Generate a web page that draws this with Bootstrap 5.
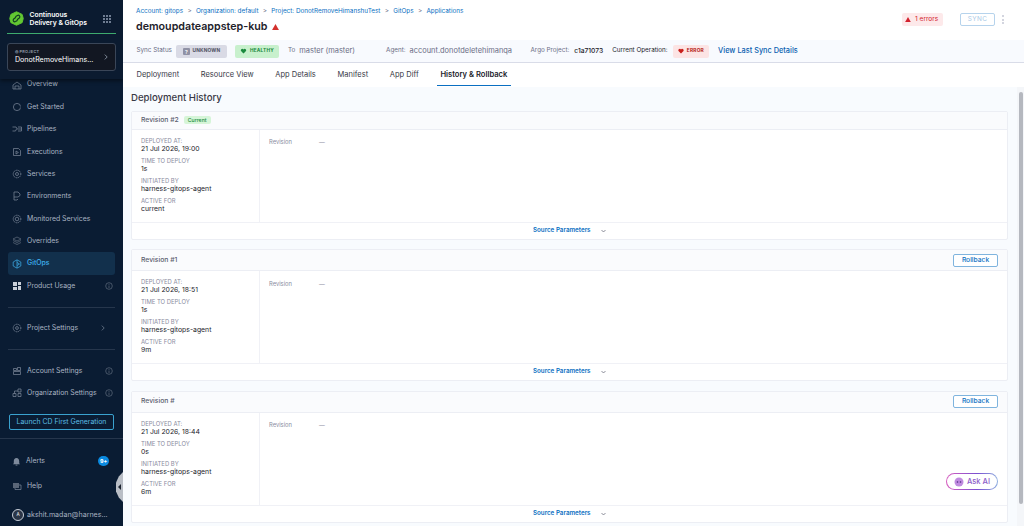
<!DOCTYPE html>
<html lang="en">
<head>
<meta charset="UTF-8">
<meta name="viewport" content="width=device-width, initial-scale=1.0">
<title>History &amp; Rollback</title>
<link href="https://cdn.jsdelivr.net/npm/bootstrap@5.3.0/dist/css/bootstrap.min.css" rel="stylesheet">
<style>
html, body { height: 526px; overflow: hidden; }
body { font-family: Inter, "Liberation Sans", sans-serif; font-size: 7px; color: #22222a; background: #fafcff; }
.app-shell { width: 1024px; height: 526px; }
.side-rail { width: 123px; height: 526px; background: #0a1c33; color: #a9b3c2; flex: none; position: relative; overflow: hidden; }
.side-top { height: 79px; flex: none; padding: 11px 7px 0; background: #0b1b30; box-shadow: 0 2px 4px rgba(0,0,0,.45); position: relative; z-index: 1; }
.side-brand { height: 23px; border-bottom: 1px solid #3dab6e; padding: 0 1px 0 2px; color: #fff; font-size: 6.8px; font-weight: 600; line-height: 8.3px; gap: 5.5px; }
.brand-dots { display: grid; grid-template-columns: repeat(3, 2px); gap: 1.2px; }
.brand-dots i { width: 2px; height: 2px; background: #6f7d92; display: block; }
.project-pick { height: 28px; margin-top: 9px; border: 1px solid #3a4658; border-radius: 3px; background: #121722; padding: 5px 7px; color: #fff; font-size: 7.1px; }
.project-pick small { display: block; font-size: 3.8px; font-weight: 600; letter-spacing: .3px; color: #95a0b0; line-height: 7px; }
.side-list { padding: 0 8px; margin-top: -5.7px; }
.side-row { height: 22.4px; padding: 0 2px 0 4px; gap: 5px; font-size: 6.9px; }
.side-row svg { flex: none; }
.side-row.is-on { background: #12304c; border-radius: 3px; color: #3fb1ee; font-weight: 500; }
.side-rule { border-top: 1px solid #26364c; margin: 9.5px 0; }
.launch-btn { width: 105px; height: 16px; margin: 9.5px 0 0 1px; border: 1px solid #3aa2cf; border-radius: 2px; color: #5dbde4; font-size: 6.9px; }
.foot-rule { border-top: 1px solid #26364c; margin: 8px -8px 11px; }
.help-row { margin-top: 2.6px; }
.user-row { margin-top: 6.6px; gap: 3px; font-size: 7.1px; }
.nine-pill { background: #0a8ae0; color: #fff; font-size: 5.4px; font-weight: 700; border-radius: 6px; width: 11px; height: 10px; }
.avatar-dot { width: 12px; height: 12px; border: 1px solid #c7ced8; border-radius: 50%; font-size: 4.6px; color: #fff; background: #2a3547; flex: none; }
.rail-handle { position: absolute; right: 0; top: 472px; width: 7px; height: 30px; background: #b9bec6; clip-path: polygon(100% 0, 100% 100%, 40% 85%, 0 65%, 0 35%, 40% 15%); z-index: 2; }
.rail-handle::after { content: ""; position: absolute; left: 2px; top: 12px; border: 3px solid transparent; border-right-color: #1c2430; border-left: 0; }
.main-pane { min-width: 0; height: 526px; }
.top-head { height: 40px; flex: none; background: #fff; padding: 7px 20px 0 13px; }
.crumbs { font-size: 6.35px; color: #0a6fc2; gap: 4.3px; line-height: 8px; }
.crumbs b { font-weight: 400; color: #6b6d85; }
.app-title { font-size: 10.7px; font-weight: 600; color: #22222a; margin: 5px 0 0; line-height: 14px; }
.head-tools { margin-top: 6px; }
.err-chip { background: #fde9ea; color: #d3212d; border-radius: 2px; height: 13px; padding: 0 3px; font-size: 6.6px; gap: 4px; margin-right: 17px; width: 41px; white-space: nowrap; }
.sync-btn { width: 35px; height: 13px; border: 1px solid #b6d3ec; border-radius: 2px; color: #a9c9e6; font-size: 6.4px; letter-spacing: .4px; }
.kebab-dots { margin: 2px 0 0 7px; width: 2px; gap: 1.6px; }
.kebab-dots i { width: 2px; height: 2px; background: #c4c7d4; border-radius: 50%; display: block; }
.sync-bar { height: 23px; flex: none; background: #f8fafe; border-bottom: 1px solid #d9dce8; padding: 0 0 0 13.5px; font-size: 6.3px; color: #6b6d85; }
.sync-val { font-size: 7.45px; color: #6b6d85; margin-left: 4px; }
.sp-to { margin-left: 9px; }
.sp-agent { margin-left: 31px; }
.sp-argo { margin-left: 18.5px; }
.sp-cur { margin-left: 9px; color: #22222a; }
.argo-val { margin-left: 5px; color: #22222a; font-weight: 500; font-size: 6.7px; }
.last-sync { margin-left: 9px; color: #0a5fb0; font-size: 7.35px; font-weight: 500; }
.pill-gray, .pill-green, .pill-red { height: 13px; border-radius: 2px; font-size: 4.8px; font-weight: 700; letter-spacing: .2px; gap: 3px; flex: none; }
.pill-gray { background: #d9dae5; color: #4f5162; width: 51px; }
.pill-green { background: #c8f0cd; color: #1b8a3e; width: 44px; }
.pill-red { background: #fce4e4; color: #b41710; width: 36.5px; margin-left: 5px; }
.tab-strip { height: 24px; flex: none; background: #fff; padding-left: 13.5px; gap: 21.7px; font-size: 7.5px; color: #383946; }
.tab-strip span { height: 23px; line-height: 23.5px; }
.tab-strip .tab-on { font-weight: 600; font-size: 7.6px; color: #22222a; box-shadow: 0 -1px 0 #0a6fc2 inset; padding: 0 3.5px; margin: 0 -3.5px; }
.hist-pane { background: #f8fbfe; padding: 0 9.5px 0 8px; position: relative; min-width: 0; }
.hist-title { font-size: 9.6px; font-weight: 500; color: #383946; line-height: 12px; padding: 4.5px 0 7px; margin: 0; }
.rev-card { background: #fff; border: 1px solid #eceef4; border-radius: 2px; margin-bottom: 9.5px; }
.rev-top { background: #fafbfd; border-bottom: 1px solid #eceef4; padding: 0 8.5px 0 9px; font-size: 6.8px; font-weight: 500; color: #5c5e70; gap: 5px; }
.rev-top.first { height: 18px; }
.rev-top.other { height: 21px; }
.cur-tag { background: #d6f5d8; color: #1b8a3e; font-size: 5.2px; font-weight: 500; border-radius: 2px; padding: 1.5px 4px; line-height: 5px; }
.roll-btn { width: 45px; height: 13px; border: 1px solid #7fb4de; border-radius: 2px; background: #fff; color: #0a6fc2; font-size: 6.7px; font-weight: 500; padding: 0; }
.rev-body { height: 92px; }
.rev-meta { width: 128px; height: 92px; border-right: 1px solid #f0f1f6; padding: 7px 9px 0; flex: none; }
.meta-k { font-size: 5.9px; color: #8a8ca0; line-height: 7px; text-transform: uppercase; }
.meta-v { font-size: 6.85px; color: #22222a; line-height: 9.4px; margin-bottom: 3.6px; }
.rev-info { padding: 8.5px 9px 0; gap: 27px; font-size: 5.8px; color: #8a8ca0; line-height: 7px; }
.rev-foot { height: 17px; border-top: 1px solid #f0f1f6; color: #0a6fc2; font-size: 6.25px; font-weight: 600; gap: 10px; }
.ask-ai { position: absolute; right: 19px; bottom: 36px; width: 52px; height: 17px; border-radius: 9px; border: 1px solid transparent; background: linear-gradient(#fff, #fff) padding-box, linear-gradient(90deg, #d85fc0, #7a4fd0 60%, #8fb0e0) border-box; color: #8c5cc8; font-size: 7.6px; font-weight: 500; gap: 3px; }
.page-scroll { width: 7px; background: #f4f6f9; flex: none; position: relative; }
.page-scroll i { position: absolute; left: 1.5px; right: 1px; top: 5px; height: 412px; background: #b5b8bf; border-radius: 2px; display: block; }
.main-lower { min-height: 0; }
</style>
</head>
<body>
<div class="app-shell d-flex">
  <!-- Left nav -->
  <div class="side-rail d-flex flex-column">
    <div class="side-top">
      <div class="side-brand d-flex align-items-start">
        <svg width="15" height="15" viewBox="0 0 16 16" class="flex-shrink-0"><path d="M8 .8 14 3.600 15.200 8 14 12.400 8 15.200 2 12.400 .8 8 2 3.600Z" fill="#62c832" stroke="#62c832" stroke-width="1" stroke-linejoin="round"/><path d="M7.200 5.800 9 4.700c1.800-1 3.500 1.300 2 2.800L8.900 9M8.800 10.200 7 11.300c-1.800 1-3.500-1.300-2-2.800L7.100 7" fill="none" stroke="#0f3a22" stroke-width="1.200" stroke-linecap="round"/></svg>
        <span class="flex-grow-1">Continuous<br>Delivery &amp; GitOps</span>
        <span class="brand-dots mt-1 me-1"><i></i><i></i><i></i><i></i><i></i><i></i><i></i><i></i><i></i></span>
      </div>
      <div class="project-pick d-flex align-items-center justify-content-between">
        <div><small>&#9678; PROJECT</small>DonotRemoveHimans...</div>
        <svg width="4" height="6" viewBox="0 0 4 6"><path d="M.8.6 3.200 3 .8 5.400" fill="none" stroke="#9aa5b5" stroke-width=".8"/></svg>
      </div>
    </div>
    <div class="side-list flex-grow-1">
      <div class="side-row d-flex align-items-center"><svg width="10" height="10" viewBox="0 0 10 10"><path d="M1 5 5 2l4 3v4H1ZM3 9V6h4v3" fill="none" stroke="#7e8a9c" stroke-width=".7"/></svg>Overview</div>
      <div class="side-row d-flex align-items-center"><svg width="10" height="10" viewBox="0 0 10 10"><circle cx="5" cy="5" r="3.600" fill="none" stroke="#7e8a9c" stroke-width=".7"/><path d="M5 5h4" stroke="#0a1c33" stroke-width="1"/></svg>Get Started</div>
      <div class="side-row d-flex align-items-center"><svg width="10" height="10" viewBox="0 0 10 10"><path d="M.5 3h3.600l1 2h4.400M.5 7h3l1-2M6 3h3.500v4H6" fill="none" stroke="#7e8a9c" stroke-width=".7"/></svg>Pipelines</div>
      <div class="side-row d-flex align-items-center"><svg width="10" height="10" viewBox="0 0 10 10"><path d="M1.500 1.500h5l2 2v5h-7Z M4 4v3l2.400-1.500Z" fill="none" stroke="#7e8a9c" stroke-width=".7"/></svg>Executions</div>
      <div class="side-row d-flex align-items-center"><svg width="10" height="10" viewBox="0 0 10 10"><circle cx="5" cy="5" r="3.800" fill="none" stroke="#7e8a9c" stroke-width=".9" stroke-dasharray="1.200 .8"/><circle cx="5" cy="5" r="1.500" fill="none" stroke="#7e8a9c" stroke-width=".7"/></svg>Services</div>
      <div class="side-row d-flex align-items-center"><svg width="10" height="10" viewBox="0 0 10 10"><path d="M2 1h4l2 2v1.500L6 6H2Zm0 5v3h3l1-1" fill="none" stroke="#7e8a9c" stroke-width=".7"/></svg>Environments</div>
      <div class="side-row d-flex align-items-center"><svg width="10" height="10" viewBox="0 0 10 10"><circle cx="5" cy="5" r="3.800" fill="none" stroke="#7e8a9c" stroke-width=".9" stroke-dasharray="1.200 .8"/><circle cx="5" cy="5" r="1.800" fill="none" stroke="#7e8a9c" stroke-width=".7"/></svg>Monitored Services</div>
      <div class="side-row d-flex align-items-center"><svg width="10" height="10" viewBox="0 0 10 10"><path d="M5 1 9 3 5 5 1 3Zm-4 3.500 4 2 4-2M1 6.500l4 2 4-2" fill="none" stroke="#6e7a8c" stroke-width=".6"/></svg>Overrides</div>
      <div class="side-row is-on d-flex align-items-center"><svg width="10" height="10" viewBox="0 0 10 10"><path d="M5 .8 8.800 3v4L5 9.200 1.200 7V3Z" fill="none" stroke="#3fb1ee" stroke-width=".7"/><path d="M5 1v8M5 3.500 7.500 5 5 6.500" fill="none" stroke="#3fb1ee" stroke-width=".7"/></svg>GitOps</div>
      <div class="side-row d-flex align-items-center"><svg width="10" height="10" viewBox="0 0 10 10"><path d="M1 1h4v4H1ZM6 1h3v3H6ZM6 5h3v4H6ZM1 6h4v3H1Z" fill="#c9cfd8"/></svg><span class="flex-grow-1">Product Usage</span><svg width="8" height="8" viewBox="0 0 8 8"><circle cx="4" cy="4" r="3.300" fill="none" stroke="#6e7a8c" stroke-width=".6"/><path d="M4 3.500V6M4 2v.8" stroke="#6e7a8c" stroke-width=".6"/></svg></div>
      <div class="side-rule"></div>
      <div class="side-row d-flex align-items-center"><svg width="10" height="10" viewBox="0 0 10 10"><circle cx="5" cy="5" r="3.800" fill="none" stroke="#7e8a9c" stroke-width=".9" stroke-dasharray="1.200 .8"/><circle cx="5" cy="5" r="1.400" fill="none" stroke="#7e8a9c" stroke-width=".7"/></svg><span class="flex-grow-1">Project Settings</span><svg class="me-2" width="4" height="6" viewBox="0 0 4 6"><path d="M.8.6 3.200 3 .8 5.400" fill="none" stroke="#7e8a9c" stroke-width=".7"/></svg></div>
      <div class="side-rule"></div>
      <div class="side-row d-flex align-items-center"><svg width="10" height="10" viewBox="0 0 10 10"><path d="M1.500 2.500h3v2h-3ZM5.500 1.500h3v3h-3ZM1.500 5.500h7v3h-7Z" fill="none" stroke="#7e8a9c" stroke-width=".7"/></svg><span class="flex-grow-1">Account Settings</span><svg width="8" height="8" viewBox="0 0 8 8"><circle cx="4" cy="4" r="3.300" fill="none" stroke="#6e7a8c" stroke-width=".6"/><path d="M4 3.500V6M4 2v.8" stroke="#6e7a8c" stroke-width=".6"/></svg></div>
      <div class="side-row d-flex align-items-center"><svg width="10" height="10" viewBox="0 0 10 10"><path d="M1 5.500h3v3H1ZM6 5.500h3v3H6ZM6 1h3v3H6ZM2.500 5.500V3H6" fill="none" stroke="#7e8a9c" stroke-width=".7"/></svg><span class="flex-grow-1">Organization Settings</span><svg width="8" height="8" viewBox="0 0 8 8"><circle cx="4" cy="4" r="3.300" fill="none" stroke="#6e7a8c" stroke-width=".6"/><path d="M4 3.500V6M4 2v.8" stroke="#6e7a8c" stroke-width=".6"/></svg></div>
      <div class="launch-btn d-flex align-items-center justify-content-center">Launch CD First Generation</div>
      <div class="foot-rule"></div>
      <div class="side-row d-flex align-items-center"><svg width="9" height="9" viewBox="0 0 10 10"><path d="M5 1c-2 0-3 1.500-3 3.500V7L1 8h8L8 7V4.500C8 2.500 7 1 5 1ZM4 8.500h2V9.500H4Z" fill="#7e8a9c"/></svg><span class="flex-grow-1">Alerts</span><span class="nine-pill d-flex align-items-center justify-content-center me-1">9+</span></div>
      <div class="side-row help-row d-flex align-items-center"><svg width="10" height="10" viewBox="0 0 10 10"><path d="M1 2h6v5H1Z" fill="#5a6678"/><path d="M7 4h2v4.500H3V7" fill="none" stroke="#7e8a9c" stroke-width=".7"/></svg>Help</div>
      <div class="side-row user-row d-flex align-items-center"><span class="avatar-dot d-flex align-items-center justify-content-center">A</span>akshit.madan@harnes...</div>
    </div>
    <div class="rail-handle"></div>
  </div>

  <!-- Main -->
  <div class="main-pane d-flex flex-column flex-grow-1">
    <div class="top-head d-flex justify-content-between">
      <div>
        <div class="crumbs d-flex">
          <span>Account: gitops</span><b>&gt;</b><span>Organization: default</span><b>&gt;</b><span>Project: DonotRemoveHimanshuTest</span><b>&gt;</b><span>GitOps</span><b>&gt;</b><span>Applications</span>
        </div>
        <h1 class="app-title d-flex align-items-center">demoupdateappstep-kub
          <svg class="ms-1" width="7" height="6" viewBox="0 0 8 7"><path d="M4 0 8 7H0Z" fill="#d3312d"/></svg>
        </h1>
      </div>
      <div class="head-tools d-flex align-items-start">
        <div class="err-chip d-flex align-items-center"><svg width="6" height="5" viewBox="0 0 8 7"><path d="M4 0 8 7H0Z" fill="#d3212d"/></svg>1 errors</div>
        <div class="sync-btn d-flex align-items-center justify-content-center">SYNC</div>
        <div class="kebab-dots d-flex flex-column"><i></i><i></i><i></i></div>
      </div>
    </div>
    <div class="sync-bar d-flex align-items-center">
      <span>Sync Status</span>
      <span class="pill-gray d-flex align-items-center justify-content-center ms-1"><svg width="7" height="7" viewBox="0 0 7 7"><rect width="7" height="7" rx="1" fill="#8f91a5"/><text x="3.500" y="5.500" font-size="5" font-weight="700" text-anchor="middle" fill="#fff">?</text></svg>UNKNOWN</span>
      <span class="pill-green d-flex align-items-center justify-content-center ms-2"><svg width="7" height="6" viewBox="0 0 6 6"><path d="M3 5.500.5 3C-.3 1.800 1.800-.2 3 1.500 4.200-.2 6.300 1.800 5.500 3Z" fill="#1b8a3e"/></svg>HEALTHY</span>
      <span class="sp-to">To</span><span class="sync-val">master (master)</span>
      <span class="sp-agent">Agent:</span><span class="sync-val">account.donotdeletehimanqa</span>
      <span class="sp-argo">Argo Project:</span><span class="argo-val">c1a71073</span>
      <span class="sp-cur">Current Operation:</span>
      <span class="pill-red d-flex align-items-center justify-content-center"><svg width="6" height="6" viewBox="0 0 6 6"><path d="M3 5.500.5 3C-.3 1.800 1.800-.2 3 1.500 4.200-.2 6.300 1.800 5.500 3Z" fill="#c9201c"/></svg>ERROR</span>
      <span class="last-sync">View Last Sync Details</span>
    </div>
    <div class="tab-strip d-flex">
      <span>Deployment</span><span>Resource View</span><span>App Details</span><span>Manifest</span><span>App Diff</span><span class="tab-on">History &amp; Rollback</span>
    </div>
    <div class="main-lower d-flex flex-grow-1">
      <div class="hist-pane flex-grow-1">
        <h2 class="hist-title">Deployment History</h2>

        <div class="rev-card">
          <div class="rev-top first d-flex align-items-center">Revision #2 <span class="cur-tag">Current</span></div>
          <div class="rev-body d-flex">
            <div class="rev-meta">
              <div class="meta-k">Deployed at:</div><div class="meta-v">21 Jul 2026, 19:00</div>
              <div class="meta-k">Time to deploy</div><div class="meta-v">1s</div>
              <div class="meta-k">Initiated by</div><div class="meta-v">harness-gitops-agent</div>
              <div class="meta-k">Active for</div><div class="meta-v">current</div>
            </div>
            <div class="rev-info d-flex"><span>Revision</span><span>—</span></div>
          </div>
          <div class="rev-foot d-flex align-items-center justify-content-center">Source Parameters <svg width="5" height="4" viewBox="0 0 5 4"><path d="M.5 1 2.500 3 4.500 1" fill="none" stroke="#5c5e70" stroke-width=".7"/></svg></div>
        </div>

        <div class="rev-card">
          <div class="rev-top other d-flex align-items-center justify-content-between">Revision #1 <button class="roll-btn">Rollback</button></div>
          <div class="rev-body d-flex">
            <div class="rev-meta">
              <div class="meta-k">Deployed at:</div><div class="meta-v">21 Jul 2026, 18:51</div>
              <div class="meta-k">Time to deploy</div><div class="meta-v">1s</div>
              <div class="meta-k">Initiated by</div><div class="meta-v">harness-gitops-agent</div>
              <div class="meta-k">Active for</div><div class="meta-v">9m</div>
            </div>
            <div class="rev-info d-flex"><span>Revision</span><span>—</span></div>
          </div>
          <div class="rev-foot d-flex align-items-center justify-content-center">Source Parameters <svg width="5" height="4" viewBox="0 0 5 4"><path d="M.5 1 2.500 3 4.500 1" fill="none" stroke="#5c5e70" stroke-width=".7"/></svg></div>
        </div>

        <div class="rev-card">
          <div class="rev-top other d-flex align-items-center justify-content-between">Revision # <button class="roll-btn">Rollback</button></div>
          <div class="rev-body d-flex">
            <div class="rev-meta">
              <div class="meta-k">Deployed at:</div><div class="meta-v">21 Jul 2026, 18:44</div>
              <div class="meta-k">Time to deploy</div><div class="meta-v">0s</div>
              <div class="meta-k">Initiated by</div><div class="meta-v">harness-gitops-agent</div>
              <div class="meta-k">Active for</div><div class="meta-v">6m</div>
            </div>
            <div class="rev-info d-flex"><span>Revision</span><span>—</span></div>
          </div>
          <div class="rev-foot d-flex align-items-center justify-content-center">Source Parameters <svg width="5" height="4" viewBox="0 0 5 4"><path d="M.5 1 2.500 3 4.500 1" fill="none" stroke="#5c5e70" stroke-width=".7"/></svg></div>
        </div>

        <div class="ask-ai d-flex align-items-center justify-content-center">
          <svg width="10" height="10" viewBox="0 0 10 10"><circle cx="5" cy="5" r="4.500" fill="#c08be0"/><circle cx="3.500" cy="5" r=".8" fill="#4b2a80"/><circle cx="6.500" cy="5" r=".8" fill="#4b2a80"/></svg>Ask AI
        </div>
      </div>
      <div class="page-scroll"><i></i></div>
    </div>
  </div>
</div>
<script src="https://cdn.jsdelivr.net/npm/bootstrap@5.3.0/dist/js/bootstrap.bundle.min.js"></script>
</body>
</html>
